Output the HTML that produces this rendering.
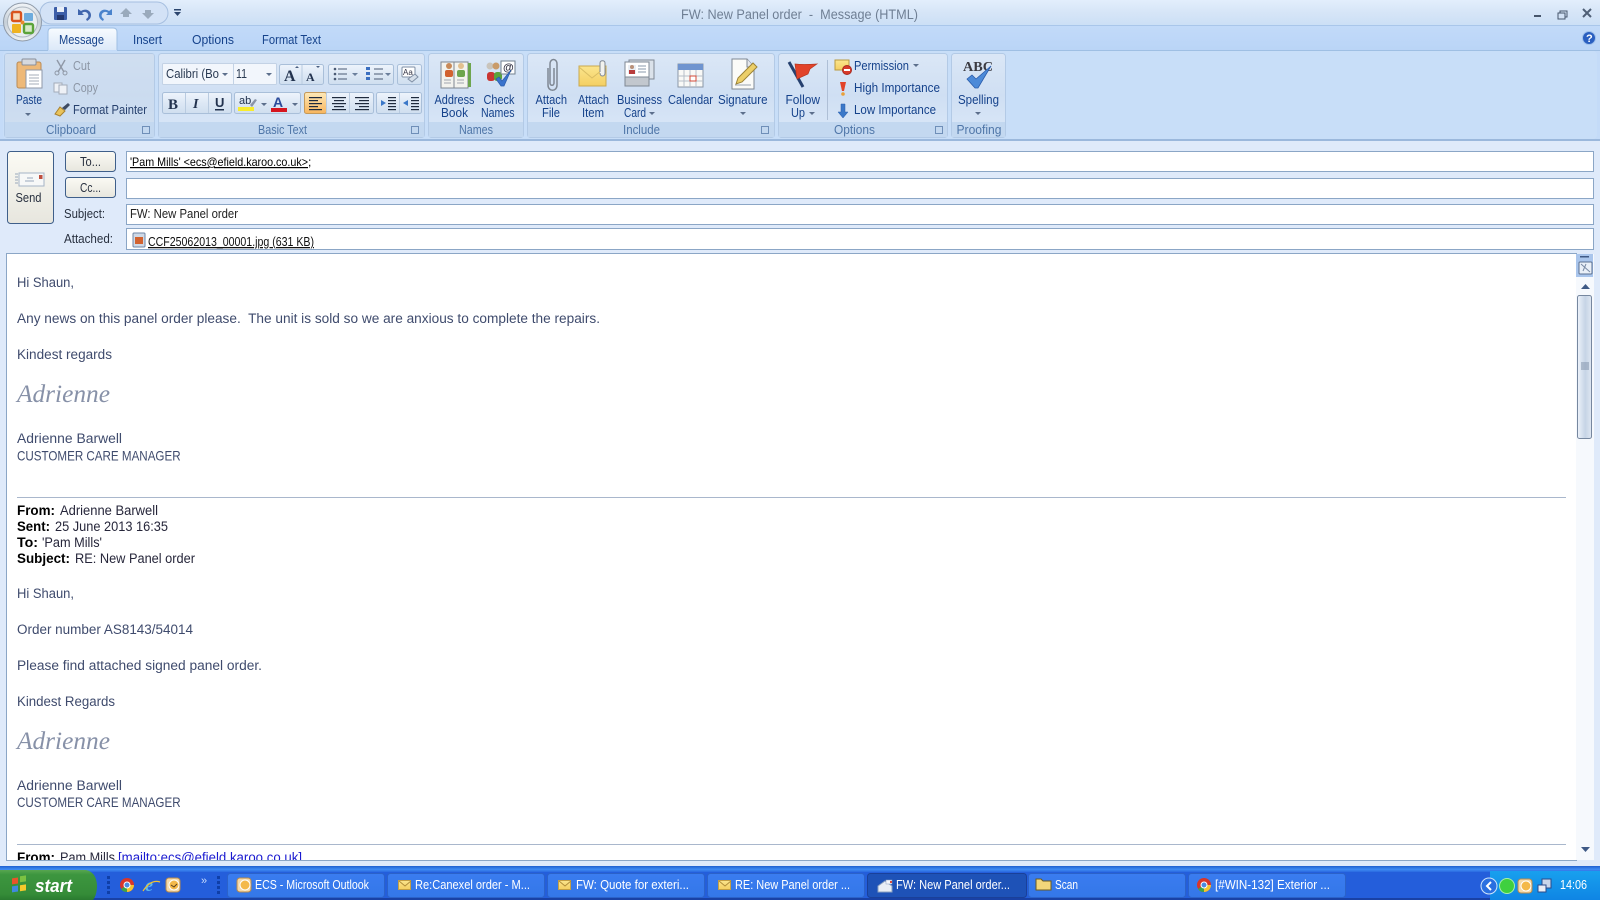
<!DOCTYPE html>
<html><head><meta charset="utf-8"><title>FW: New Panel order - Message (HTML)</title>
<style>
html,body{margin:0;padding:0;background:#dfeafa;overflow:hidden}
svg{display:block}
text{font-family:"Liberation Sans","DejaVu Sans",sans-serif;font-size:12.5px;fill:#15428b;white-space:pre}
.t{fill:#3f5a86}.l{fill:#4f76a8;font-size:12.5px}.k{fill:#222}.g{fill:#8c96a5}
.b{fill:#3f4b6d;font-size:13.5px}.bb{fill:#000;font-size:13.5px;font-weight:bold}.bk{fill:#26263a;font-size:13.5px}
.w{fill:#fff;font-size:12.5px}
.s{font-family:"Liberation Serif",serif;font-style:italic;font-size:25px;fill:#8791a8;font-weight:normal}
</style></head><body>
<svg width="1600" height="900" viewBox="0 0 1600 900" xmlns="http://www.w3.org/2000/svg">
<defs>
<linearGradient id="tb" x1="0" y1="0" x2="0" y2="1"><stop offset="0" stop-color="#e3eefc"/><stop offset=".5" stop-color="#d6e5f7"/><stop offset="1" stop-color="#cbdff6"/></linearGradient>
<linearGradient id="rb" x1="0" y1="0" x2="0" y2="1"><stop offset="0" stop-color="#c2daf9"/><stop offset="1" stop-color="#b9d4f6"/></linearGradient>
<linearGradient id="gp" x1="0" y1="0" x2="0" y2="1"><stop offset="0" stop-color="#dbe7f6"/><stop offset=".5" stop-color="#cfdff3"/><stop offset="1" stop-color="#dbe8f8"/></linearGradient>
<linearGradient id="tab" x1="0" y1="0" x2="0" y2="1"><stop offset="0" stop-color="#f7fbff"/><stop offset="1" stop-color="#dbe8f8"/></linearGradient>
<linearGradient id="btn" x1="0" y1="0" x2="0" y2="1"><stop offset="0" stop-color="#eef4fc"/><stop offset=".5" stop-color="#dde8f5"/><stop offset="1" stop-color="#cfdeef"/></linearGradient>
<linearGradient id="org" x1="0" y1="0" x2="0" y2="1"><stop offset="0" stop-color="#fde9b8"/><stop offset="1" stop-color="#f8b55e"/></linearGradient>
<linearGradient id="fb" x1="0" y1="0" x2="0" y2="1"><stop offset="0" stop-color="#fbfaf4"/><stop offset="1" stop-color="#e7e6de"/></linearGradient>
<linearGradient id="st" x1="0" y1="0" x2="0" y2="1"><stop offset="0" stop-color="#58a650"/><stop offset=".15" stop-color="#3d963f"/><stop offset=".8" stop-color="#358c38"/><stop offset="1" stop-color="#2a7a30"/></linearGradient>
<linearGradient id="tk" x1="0" y1="0" x2="0" y2="1"><stop offset="0" stop-color="#1e5fd0"/><stop offset=".1" stop-color="#3f8cf3"/><stop offset=".2" stop-color="#245edb"/><stop offset=".9" stop-color="#2663e0"/><stop offset="1" stop-color="#1941a5"/></linearGradient>
<linearGradient id="tbn" x1="0" y1="0" x2="0" y2="1"><stop offset="0" stop-color="#3a7cf0"/><stop offset="1" stop-color="#3477e8"/></linearGradient>
<linearGradient id="try" x1="0" y1="0" x2="0" y2="1"><stop offset="0" stop-color="#18a0ee"/><stop offset="1" stop-color="#0f85e4"/></linearGradient>
<linearGradient id="sil" x1="0" y1="0" x2="0" y2="1"><stop offset="0" stop-color="#f2f5f8"/><stop offset=".5" stop-color="#c6cfd8"/><stop offset="1" stop-color="#edf1f4"/></linearGradient>
<linearGradient id="th" x1="0" y1="0" x2="1" y2="0"><stop offset="0" stop-color="#eef3fa"/><stop offset=".55" stop-color="#c6d4e6"/><stop offset="1" stop-color="#dfe7f2"/></linearGradient>
<linearGradient id="env" x1="0" y1="0" x2="0" y2="1"><stop offset="0" stop-color="#fbe58d"/><stop offset="1" stop-color="#f4cf62"/></linearGradient>
<clipPath id="bc"><rect x="8" y="255" width="1568" height="605"/></clipPath>
</defs>

<rect width="1600" height="900" fill="#dfeafa"/>
<!-- title bar -->
<rect width="1600" height="26" fill="url(#tb)"/>
<rect y="25" width="1600" height="1" fill="#a9c6ea"/>
<rect y="26" width="1600" height="26" fill="url(#rb)"/>
<rect x="40" y="2" width="128" height="22" rx="11" fill="#d3e2f6" stroke="#a6bfe0"/>
<!-- office button -->
<circle cx="22.5" cy="22" r="19" fill="url(#sil)" stroke="#8f9aa8"/>
<circle cx="22.5" cy="22" r="15" fill="#e9edf0" stroke="#aeb7c0"/>
<rect x="12" y="12" width="9" height="9" rx="1.5" fill="#f6dcc0" stroke="#d9531d" stroke-width="2.4"/>
<rect x="24" y="13" width="9" height="8" rx="1" fill="#4f9bd8" opacity=".8"/>
<rect x="12" y="24" width="9" height="9" rx="1" fill="#efb320"/>
<rect x="24" y="24" width="9" height="9" rx="1.5" fill="#d8eac8" stroke="#5ba33a" stroke-width="2.4"/>
<circle cx="22.5" cy="22.5" r="2" fill="#e98a2e"/>
<!-- QAT -->
<rect x="54" y="7" width="13" height="13" rx="1" fill="#3c5ea8"/><rect x="57" y="7" width="7" height="5" fill="#e9eff8"/><rect x="57" y="15" width="7" height="5" fill="#23386f"/>
<path d="M78 9v6h6l-2-2c2-2 5-1 6 1 1 2 0 4-2 5l1 2c4-2 5-6 3-9-2-3-6-3-9-1z" fill="#4066ad"/>
<path d="M112 9v6h-6l2-2c-2-2-5-1-6 1-1 2 0 4 2 5l-1 2c-4-2-5-6-3-9 2-3 6-3 9-1z" fill="#4a83cc"/>
<path d="M126 8l6 6h-3v3h-6v-3h-3z" fill="#9aaabc"/>
<path d="M148 19l6-6h-3v-3h-6v3h-3z" fill="#9aaabc"/>
<rect x="174" y="9" width="7" height="1.5" fill="#2b456e"/><path d="M174 12h7l-3.500 4z" fill="#2b456e"/>
<text x="681" y="19" style="font-size:13.5px;fill:#6f7f94" textLength="237" lengthAdjust="spacingAndGlyphs">FW: New Panel order  -  Message (HTML)</text>
<!-- window buttons -->
<rect x="1534" y="15" width="7" height="2" fill="#46556b"/>
<rect x="1560" y="11" width="7" height="6" fill="none" stroke="#46556b"/><rect x="1558" y="13" width="7" height="6" fill="#d3e2f5" stroke="#46556b"/>
<path d="M1583 9l8 8M1591 9l-8 8" stroke="#4f5f76" stroke-width="2"/>
<circle cx="1589" cy="38" r="6.5" fill="#2a5fc0" stroke="#9fc0ea"/><text x="1586" y="42" style="font-size:11px;font-weight:bold;fill:#fff">?</text>

<!-- tabs -->
<path d="M48 51V32q0-4 4-4h61q4 0 4 4v19z" fill="url(#tab)" stroke="#9fbfe3"/>
<text x="59" y="44" textLength="45" lengthAdjust="spacingAndGlyphs">Message</text>
<text x="133" y="44" textLength="29" lengthAdjust="spacingAndGlyphs">Insert</text>
<text x="192" y="44" textLength="42" lengthAdjust="spacingAndGlyphs">Options</text>
<text x="262" y="44" textLength="59" lengthAdjust="spacingAndGlyphs">Format Text</text>

<!-- ribbon -->
<rect y="50" width="1600" height="89" fill="#c4dbf8"/>
<rect y="50" x="0" width="48" height="1" fill="#9fbfe3"/><rect y="50" x="117" width="1483" height="1" fill="#9fbfe3"/>
<rect y="139" width="1600" height="2" fill="#9bb8dc"/>
<rect x="3" y="51" width="1594" height="88" fill="#c8def8" rx="4"/>
<!-- groups -->
<g stroke="#b3cae6" fill="url(#gp)">
<rect x="4.500" y="53.500" width="150" height="84" rx="3"/>
<rect x="158.500" y="53.500" width="266" height="84" rx="3"/>
<rect x="428.500" y="53.500" width="95" height="84" rx="3"/>
<rect x="527.500" y="53.500" width="247" height="84" rx="3"/>
<rect x="778.500" y="53.500" width="169" height="84" rx="3"/>
<rect x="951.500" y="53.500" width="54" height="84" rx="3"/>
</g>
<g fill="#c3d8f0">
<rect x="5" y="122" width="149" height="15"/><rect x="159" y="122" width="265" height="15"/><rect x="429" y="122" width="94" height="15"/><rect x="528" y="122" width="246" height="15"/><rect x="779" y="122" width="168" height="15"/><rect x="952" y="122" width="53" height="15"/>
</g>
<rect x="5" y="54" width="149" height="68" fill="#c8d9ec" opacity=".6"/>
<g>
<text class="l" x="46" y="134" textLength="50" lengthAdjust="spacingAndGlyphs">Clipboard</text>
<text class="l" x="258" y="134" textLength="49" lengthAdjust="spacingAndGlyphs">Basic Text</text>
<text class="l" x="459" y="134" textLength="34" lengthAdjust="spacingAndGlyphs">Names</text>
<text class="l" x="623" y="134" textLength="37" lengthAdjust="spacingAndGlyphs">Include</text>
<text class="l" x="834" y="134" textLength="41" lengthAdjust="spacingAndGlyphs">Options</text>
<text class="l" x="956.500" y="134" textLength="45" lengthAdjust="spacingAndGlyphs">Proofing</text>
</g>
<!-- launchers -->
<g fill="none" stroke="#6f8fb8"><rect x="142.500" y="126.500" width="7" height="7"/><rect x="411.500" y="126.500" width="7" height="7"/><rect x="761.500" y="126.500" width="7" height="7"/><rect x="935.500" y="126.500" width="7" height="7"/></g>

<!-- clipboard -->
<rect x="17" y="62" width="24" height="26" rx="2" fill="#eeb978" stroke="#b98a55"/>
<rect x="22" y="59" width="14" height="6" rx="1" fill="#d6d9de" stroke="#8a8f99"/>
<path d="M26 70h16v18H26z" fill="#fff" stroke="#8f98a8"/><path d="M29 75h10M29 78h10M29 81h10M29 84h10" stroke="#a5adba"/>
<text x="16" y="104" textLength="26" lengthAdjust="spacingAndGlyphs">Paste</text>
<path d="M25 113h6l-3 3z" fill="#5c6f8c"/>
<path d="M57 60l4 7 4-7M61 67l-3 5M61 67l3 5" fill="none" stroke="#8f98a6" stroke-width="1.400"/><circle cx="57" cy="73" r="2" fill="none" stroke="#8f98a6"/><circle cx="65" cy="73" r="2" fill="none" stroke="#8f98a6"/>
<text class="g" x="73" y="70" textLength="17" lengthAdjust="spacingAndGlyphs">Cut</text>
<rect x="54" y="83" width="8" height="9" fill="#eef1f6" stroke="#a3acb9"/><rect x="59" y="85" width="8" height="9" fill="#eef1f6" stroke="#a3acb9"/>
<text class="g" x="73" y="92" textLength="25" lengthAdjust="spacingAndGlyphs">Copy</text>
<path d="M55 114l5-7 5 4-5 5z" fill="#e9c35c" stroke="#a9812e"/><path d="M62 108l6-5 2 2-5 5z" fill="#3d4a62"/>
<text class="t" x="73" y="114" textLength="74" lengthAdjust="spacingAndGlyphs" style="fill:#27416e">Format Painter</text>

<!-- font row -->
<rect x="162.500" y="63.500" width="114" height="21" rx="1" fill="#f2f6fc" stroke="#c3d2e5"/><path d="M233.500 64v20" stroke="#c3d2e5"/>
<text class="k" x="166" y="78" textLength="53" lengthAdjust="spacingAndGlyphs" style="fill:#2a3a52">Calibri (Bo</text>
<text class="k" x="236" y="78" textLength="11" lengthAdjust="spacingAndGlyphs" style="fill:#2a3a52">11</text>
<path d="M222 73h6l-3 3zM266 73h6l-3 3z" fill="#5c6f8c"/>
<g fill="url(#btn)" stroke="#a9bfd9">
<rect x="279.500" y="64.500" width="44" height="20" rx="2"/>
<rect x="328.500" y="64.500" width="65" height="20" rx="2"/>
<rect x="397.500" y="64.500" width="24" height="20" rx="2"/>
<rect x="162.500" y="92.500" width="69" height="21" rx="2"/>
<rect x="234.500" y="92.500" width="66" height="21" rx="2"/>
<rect x="304.500" y="92.500" width="69" height="21" rx="2"/>
<rect x="376.500" y="92.500" width="45" height="21" rx="2"/>
</g>
<rect x="304.500" y="92.500" width="22" height="21" rx="2" fill="url(#org)" stroke="#c59a5a"/>
<path d="M302 65v19M185.500 93v20M208.500 93v20M326.500 93v20M349.500 93v20M399.500 93v20" stroke="#b9cbe0"/>
<text x="284" y="81" style="font-family:'Liberation Serif',serif;font-weight:bold;font-size:16px;fill:#22324e">A</text>
<text x="306" y="81" style="font-family:'Liberation Serif',serif;font-weight:bold;font-size:12px;fill:#22324e">A</text>
<path d="M295 68l2-2 2 2zM316 66l2 2 2-2z" fill="#4a5f80"/>
<g fill="#4a5a74"><circle cx="335" cy="69" r="1.300"/><circle cx="335" cy="74" r="1.300"/><circle cx="335" cy="79" r="1.300"/><rect x="338" y="68.500" width="9" height="1"/><rect x="338" y="73.500" width="9" height="1"/><rect x="338" y="78.500" width="9" height="1"/>
<rect x="374" y="68.500" width="9" height="1"/><rect x="374" y="73.500" width="9" height="1"/><rect x="374" y="78.500" width="9" height="1"/>
<path d="M352 73h6l-3 3zM385 73h6l-3 3z" fill="#6b7f9c"/></g>
<g fill="#3b6fc0"><rect x="366" y="67" width="4" height="3"/><rect x="366" y="72" width="4" height="3"/><rect x="366" y="77" width="4" height="3"/></g>
<rect x="402" y="67" width="13" height="10" rx="1" fill="#fff" stroke="#7f8fa5"/><text x="403" y="75" style="font-size:8px;fill:#334">Aa</text>
<path d="M408 79l7-5 3 3-6 5z" fill="#d5dee9" stroke="#7f8fa5"/>
<text x="168" y="109" style="font-family:'Liberation Serif',serif;font-weight:bold;font-size:15px;fill:#22324e">B</text>
<text x="193" y="108" style="font-family:'Liberation Serif',serif;font-style:italic;font-weight:bold;font-size:14px;fill:#22324e">I</text>
<text x="215" y="107" style="font-family:'Liberation Sans',sans-serif;font-weight:bold;font-size:13px;fill:#22324e">U</text><rect x="215" y="109" width="9" height="1.500" fill="#22324e"/>
<text x="239" y="104" style="font-size:11px;fill:#22324e">ab</text><path d="M250 105l5-6 2 1-5 7z" fill="#8a94a8"/>
<rect x="238" y="107" width="16" height="4" fill="#f8ec2d"/>
<path d="M261 103h6l-3 3zM292 103h6l-3 3z" fill="#5c6f8c"/>
<text x="273" y="107" style="font-weight:bold;font-size:14px;fill:#2a4a9a">A</text>
<rect x="271" y="108" width="16" height="4" fill="#d6151f"/>
<g fill="#1e2a3d">
<rect x="309" y="97" width="13" height="1.200"/><rect x="309" y="100" width="9" height="1.200"/><rect x="309" y="103" width="13" height="1.200"/><rect x="309" y="106" width="9" height="1.200"/><rect x="309" y="109" width="13" height="1.200"/>
<rect x="332" y="97" width="14" height="1.200"/><rect x="334" y="100" width="10" height="1.200"/><rect x="332" y="103" width="14" height="1.200"/><rect x="334" y="106" width="10" height="1.200"/><rect x="332" y="109" width="14" height="1.200"/>
<rect x="355" y="97" width="14" height="1.200"/><rect x="359" y="100" width="10" height="1.200"/><rect x="355" y="103" width="14" height="1.200"/><rect x="359" y="106" width="10" height="1.200"/><rect x="355" y="109" width="14" height="1.200"/>
<rect x="388" y="97" width="8" height="1.200"/><rect x="388" y="100" width="8" height="1.200"/><rect x="388" y="103" width="8" height="1.200"/><rect x="388" y="106" width="8" height="1.200"/><rect x="388" y="109" width="8" height="1.200"/>
<rect x="411" y="97" width="8" height="1.200"/><rect x="411" y="100" width="8" height="1.200"/><rect x="411" y="103" width="8" height="1.200"/><rect x="411" y="106" width="8" height="1.200"/><rect x="411" y="109" width="8" height="1.200"/>
</g>
<path d="M386 103l-5-3v6zM403 103l5-3v6z" fill="#3b78c8"/>

<!-- Names icons -->
<path d="M441 62h13v26h-13zM454 62h14v26h-14z" fill="#f3f3ee" stroke="#7f8791"/>
<rect x="468" y="63" width="3" height="24" fill="#6ea54e"/>
<circle cx="449" cy="66" r="3" fill="#c98a58"/><rect x="445" y="70" width="8" height="7" rx="2" fill="#d2622f"/>
<circle cx="461" cy="66" r="3" fill="#e2c08e"/><rect x="457" y="70" width="8" height="7" rx="2" fill="#6ea54e"/>
<path d="M444 80h7M444 83h7M457 80h7M457 83h7" stroke="#a0a6ae"/>
<circle cx="490" cy="66" r="3.500" fill="#c9c4bc"/><circle cx="496" cy="66" r="3.500" fill="#c99b6a"/>
<rect x="487" y="72" width="8" height="9" rx="3" fill="#c93532"/><rect x="494" y="72" width="8" height="9" rx="3" fill="#5aa33c"/>
<rect x="501" y="61" width="14" height="13" fill="#fff" stroke="#72808f"/><text x="503" y="71" style="font-size:11px;font-weight:bold;fill:#334">@</text>
<path d="M496 79l3-2 3 4 9-11-7 16h-3z" fill="#3a73cc" stroke="#2a5cab" stroke-width=".7"/>
<text x="434.500" y="104" textLength="40" lengthAdjust="spacingAndGlyphs">Address</text>
<text x="441" y="117" textLength="27" lengthAdjust="spacingAndGlyphs">Book</text>
<text x="483.500" y="104" textLength="31" lengthAdjust="spacingAndGlyphs">Check</text>
<text x="481" y="117" textLength="33.500" lengthAdjust="spacingAndGlyphs">Names</text>

<!-- Include icons -->
<path d="M548 68v17c0 7 9 7 9 0V64c0-6-7-6-7 0v19c0 3 4 3 4 0V68" fill="none" stroke="#7f8894" stroke-width="1.500"/>
<rect x="579" y="66" width="27" height="20" fill="url(#env)" stroke="#c9a94f"/><path d="M579 67l13 11 14-11" fill="none" stroke="#d9bd63"/>
<path d="M600 72V63c0-3 5-3 5 0v10c0 4-5 4-5 0" fill="#f2f2ee" stroke="#7f8894"/>
<rect x="629" y="60" width="25" height="19" fill="#dbe2ea" stroke="#7f8894"/><rect x="625" y="62" width="24" height="19" fill="#fff" stroke="#7f8894"/>
<rect x="628" y="65" width="8" height="9" fill="#e9eef4"/><circle cx="632" cy="67" r="2" fill="#b99078"/><rect x="629" y="70" width="6" height="4" fill="#b83c3c"/>
<path d="M638 66h8M638 69h8M638 72h8" stroke="#8a98ab"/><rect x="625" y="77" width="24" height="9" fill="#c2c7ce" stroke="#7f8894"/>
<rect x="678" y="64" width="25" height="23" fill="#f9f9f7" stroke="#8a96a6"/><rect x="678" y="64" width="25" height="6" fill="#6f94cf"/>
<path d="M684 70v17M690 70v17M696 70v17M678 76h25M678 81h25" stroke="#b6bec9"/><rect x="690" y="76" width="6" height="5" fill="#fff" stroke="#d24a3a"/>
<path d="M732 59h15l7 8v22h-22z" fill="#fbfbf8" stroke="#7f8894"/><path d="M747 59v8h7" fill="#e6e8ec" stroke="#7f8894"/>
<path d="M736 84l2-6 15-15 4 4-15 15z" fill="#eccf68" stroke="#9c8335"/><path d="M735 85h16" stroke="#9aa3af"/>
<text x="535.500" y="104" textLength="31.500" lengthAdjust="spacingAndGlyphs">Attach</text>
<text x="542" y="117" textLength="18" lengthAdjust="spacingAndGlyphs">File</text>
<text x="578" y="104" textLength="31" lengthAdjust="spacingAndGlyphs">Attach</text>
<text x="582" y="117" textLength="22" lengthAdjust="spacingAndGlyphs">Item</text>
<text x="617" y="104" textLength="45" lengthAdjust="spacingAndGlyphs">Business</text>
<text x="624" y="117" textLength="22" lengthAdjust="spacingAndGlyphs">Card</text><path d="M649 112h6l-3 3z" fill="#5c6f8c"/>
<text x="668" y="104" textLength="45" lengthAdjust="spacingAndGlyphs">Calendar</text>
<text x="718" y="104" textLength="49.500" lengthAdjust="spacingAndGlyphs">Signature</text><path d="M740 112h6l-3 3z" fill="#5c6f8c"/>

<!-- Options -->
<path d="M789 62l14 25" stroke="#26406f" stroke-width="3"/><path d="M795 64q8 1 22 0l-7 5-2 5-11 5z" fill="#e2432a" stroke="#b83620" stroke-width=".7"/>
<text x="785.500" y="104" textLength="34.500" lengthAdjust="spacingAndGlyphs">Follow</text>
<text x="791" y="117" textLength="14" lengthAdjust="spacingAndGlyphs">Up</text><path d="M809 112h6l-3 3z" fill="#5c6f8c"/>
<path d="M827.500 60v60" stroke="#aebfd6"/>
<rect x="835" y="60" width="14" height="10" fill="url(#env)" stroke="#b99a40"/><circle cx="847" cy="70" r="4.500" fill="#d83a2a" stroke="#a82a20"/><rect x="844" y="69" width="6" height="2" fill="#fff"/>
<text x="854" y="70" textLength="55" lengthAdjust="spacingAndGlyphs">Permission</text><path d="M913 64h6l-3 3z" fill="#5c6f8c"/>
<path d="M840 82h6l-2 9h-2z" fill="#e2432a"/><circle cx="843" cy="94" r="1.800" fill="#e8a03a"/>
<text x="854" y="92" textLength="86" lengthAdjust="spacingAndGlyphs">High Importance</text>
<path d="M841 104h4v8h3l-5 6-5-6h3z" fill="#3b78c8" stroke="#2a5cab" stroke-width=".5"/>
<text x="854" y="114" textLength="82" lengthAdjust="spacingAndGlyphs">Low Importance</text>

<!-- Proofing -->
<text x="963" y="71" textLength="30" lengthAdjust="spacingAndGlyphs" style="font-family:'Liberation Serif',serif;font-weight:bold;font-size:14px;fill:#3b3b42">ABC</text>
<path d="M967 79l5-4 4 4 15-13-13 22h-3z" fill="#4c8ad8" stroke="#2a5cab" stroke-width=".8"/>
<text x="958" y="104" textLength="41" lengthAdjust="spacingAndGlyphs">Spelling</text><path d="M975 112h6l-3 3z" fill="#5c6f8c"/>

<!-- form -->
<rect y="141" width="1600" height="113" fill="#dfeafa"/>
<rect x="7.500" y="151.500" width="46" height="72" rx="3" fill="url(#fb)" stroke="#3f5f8a"/>
<rect x="19" y="173" width="25" height="13" fill="#f7f8f8" stroke="#a5b4c6"/><path d="M15 174h3M15 177h3M15 180h3M15 183h3M25 181h9M27 178h6" stroke="#9aa8bb"/><rect x="39" y="175" width="3.500" height="4" fill="#bf4f3f"/>
<text class="k" x="15.500" y="202" textLength="26" lengthAdjust="spacingAndGlyphs" style="fill:#28303f">Send</text>
<rect x="65.500" y="151.500" width="50" height="20" rx="3" fill="url(#fb)" stroke="#3f5f8a"/>
<rect x="65.500" y="177.500" width="50" height="20" rx="3" fill="url(#fb)" stroke="#3f5f8a"/>
<text x="80" y="166" textLength="21" lengthAdjust="spacingAndGlyphs" style="fill:#28303f">To...</text>
<text x="80" y="192" textLength="21" lengthAdjust="spacingAndGlyphs" style="fill:#28303f">Cc...</text>
<text x="64" y="218" textLength="41" lengthAdjust="spacingAndGlyphs" style="fill:#28303f">Subject:</text>
<text x="64" y="243" textLength="49" lengthAdjust="spacingAndGlyphs" style="fill:#28303f">Attached:</text>
<g fill="#fff" stroke="#8ba6c6"><rect x="126.500" y="151.500" width="1467" height="20"/><rect x="126.500" y="178.500" width="1467" height="20"/><rect x="126.500" y="204.500" width="1467" height="20"/><rect x="126.500" y="228.500" width="1467" height="21"/></g>
<text x="130" y="166" textLength="178" lengthAdjust="spacingAndGlyphs" style="fill:#000;text-decoration:underline;font-size:12px">'Pam Mills' &lt;ecs@efield.karoo.co.uk&gt;</text><text x="308" y="166" style="fill:#000;font-size:12px">;</text>
<text x="130" y="218" textLength="108" lengthAdjust="spacingAndGlyphs" style="fill:#222">FW: New Panel order</text>
<rect x="133" y="233" width="12" height="14" rx="1" fill="#cfd9e6" stroke="#6f86a5"/><rect x="135" y="237" width="8" height="7" fill="#d2622f"/>
<text x="148" y="246" textLength="166" lengthAdjust="spacingAndGlyphs" style="fill:#111;text-decoration:underline">CCF25062013_00001.jpg (631 KB)</text>

<!-- body -->
<rect x="6.500" y="253.500" width="1570" height="607" fill="#fff" stroke="#8ba6c6"/>
<g clip-path="url(#bc)">
<text class="b" x="17" y="287" textLength="57" lengthAdjust="spacingAndGlyphs">Hi Shaun,</text>
<text class="b" x="17" y="323" textLength="583" lengthAdjust="spacingAndGlyphs">Any news on this panel order please.  The unit is sold so we are anxious to complete the repairs.</text>
<text class="b" x="17" y="359" textLength="95" lengthAdjust="spacingAndGlyphs">Kindest regards</text>
<text class="s" x="17" y="402" textLength="93" lengthAdjust="spacingAndGlyphs">Adrienne</text>
<text class="b" x="17" y="443" textLength="105" lengthAdjust="spacingAndGlyphs">Adrienne Barwell</text>
<text class="b" transform="translate(17 460.500) scale(.861 1)">CUSTOMER CARE MANAGER</text>
<rect x="17" y="497" width="1549" height="1" fill="#a9b7cc"/>
<text class="bb" x="17" y="515" textLength="38" lengthAdjust="spacingAndGlyphs">From:</text><text class="bk" x="60" y="515" textLength="98" lengthAdjust="spacingAndGlyphs">Adrienne Barwell</text>
<text class="bb" x="17" y="531" textLength="33" lengthAdjust="spacingAndGlyphs">Sent:</text><text class="bk" x="55" y="531" textLength="113" lengthAdjust="spacingAndGlyphs">25 June 2013 16:35</text>
<text class="bb" x="17" y="547" textLength="21" lengthAdjust="spacingAndGlyphs">To:</text><text class="bk" x="42" y="547" textLength="60" lengthAdjust="spacingAndGlyphs">'Pam Mills'</text>
<text class="bb" x="17" y="563" textLength="53" lengthAdjust="spacingAndGlyphs">Subject:</text><text class="bk" x="75" y="563" textLength="120" lengthAdjust="spacingAndGlyphs">RE: New Panel order</text>
<text class="b" x="17" y="598" textLength="57" lengthAdjust="spacingAndGlyphs">Hi Shaun,</text>
<text class="b" x="17" y="634" textLength="176" lengthAdjust="spacingAndGlyphs">Order number AS8143/54014</text>
<text class="b" x="17" y="670" textLength="245" lengthAdjust="spacingAndGlyphs">Please find attached signed panel order.</text>
<text class="b" x="17" y="706" textLength="98" lengthAdjust="spacingAndGlyphs">Kindest Regards</text>
<text class="s" x="17" y="749" textLength="93" lengthAdjust="spacingAndGlyphs">Adrienne</text>
<text class="b" x="17" y="790" textLength="105" lengthAdjust="spacingAndGlyphs">Adrienne Barwell</text>
<text class="b" transform="translate(17 807) scale(.861 1)">CUSTOMER CARE MANAGER</text>
<rect x="17" y="844" width="1549" height="1" fill="#a9b7cc"/>
<text class="bb" x="17" y="862" textLength="38" lengthAdjust="spacingAndGlyphs">From:</text><text class="bk" x="60" y="862" textLength="55" lengthAdjust="spacingAndGlyphs">Pam Mills</text><text class="bk" x="118" y="862" textLength="184" lengthAdjust="spacingAndGlyphs" style="fill:#1a1ad0;text-decoration:underline">[mailto:ecs@efield.karoo.co.uk]</text>
</g>

<!-- scrollbar -->
<rect x="1576" y="254" width="18" height="606" fill="#f6f9fd"/>
<rect x="1576" y="254" width="17" height="23" fill="#a9c5ec"/>
<rect x="1580" y="256" width="9" height="1.500" fill="#3f5a86"/>
<rect x="1579" y="262" width="13" height="12" rx="1" fill="#eaf0f8" stroke="#5a6f8f"/><path d="M1581 264l9 8M1586 264l-3 7" stroke="#7a8ba5"/>
<path d="M1581 289h9l-4.500-5z" fill="#3f5a86"/>
<rect x="1577.500" y="295.500" width="14" height="143" rx="2" fill="url(#th)" stroke="#76879f"/>
<path d="M1581 363h8M1581 365h8M1581 367h8M1581 369h8" stroke="#7f90a8"/>
<path d="M1581 847h9l-4.500 5z" fill="#3f5a86"/>

<!-- taskbar -->
<rect y="866" width="1600" height="34" fill="url(#tk)"/>
<rect y="872" width="1600" height="27" fill="#245edb"/>
<rect y="898" width="1600" height="2" fill="#1941a5"/>
<path d="M0 870h86q10 2 11 15 0 10-4 15H0z" fill="url(#st)"/>
<rect x="12" y="878" width="6" height="6" fill="#e8542b" transform="skewY(-8) translate(0 2)"/><rect x="20" y="876" width="6" height="6" fill="#7cc242" transform="skewY(-8) translate(0 3)"/><rect x="12" y="886" width="6" height="6" fill="#3f8ae0" transform="skewY(-8) translate(0 2)"/><rect x="20" y="885" width="6" height="6" fill="#f6c92c" transform="skewY(-8) translate(0 3)"/>
<text x="35" y="892" textLength="37" lengthAdjust="spacingAndGlyphs" style="fill:#fff;font-style:italic;font-weight:bold;font-size:18px">start</text>
<g fill="#0f3fa8"><rect x="107" y="876" width="3" height="3"/><rect x="107" y="881" width="3" height="3"/><rect x="107" y="886" width="3" height="3"/><rect x="107" y="891" width="3" height="3"/><rect x="217" y="876" width="3" height="3"/><rect x="217" y="881" width="3" height="3"/><rect x="217" y="886" width="3" height="3"/><rect x="217" y="891" width="3" height="3"/></g>
<circle cx="127" cy="885" r="7" fill="#d8362a"/><path d="M127 885l-6 4a7 7 0 0 0 6 3z" fill="#3fa34a"/><path d="M127 885v7a7 7 0 0 0 7-7z" fill="#f4c430"/><circle cx="127" cy="885" r="3" fill="#4a8ae0" stroke="#fff"/>
<text x="145" y="891" style="font-family:'Liberation Serif',serif;font-style:italic;font-weight:bold;font-size:18px;fill:#59b7f0">e</text><path d="M143 891q8-12 17-9" fill="none" stroke="#f1c232" stroke-width="1.200"/>
<rect x="166" y="878" width="14" height="14" rx="3" fill="#f5d9a8" stroke="#b88a4c"/><circle cx="174" cy="885" r="5" fill="#f4b94a" stroke="#fff"/><path d="M171 885l3 2 3-3" fill="none" stroke="#5a4020"/>
<text x="201" y="884" style="fill:#c7dafb;font-size:11px">»</text>
<g fill="url(#tbn)" stroke="#2b62c9">
<rect x="227.500" y="873.500" width="157" height="24" rx="3"/>
<rect x="387.500" y="873.500" width="157" height="24" rx="3"/>
<rect x="547.500" y="873.500" width="157" height="24" rx="3"/>
<rect x="707.500" y="873.500" width="157" height="24" rx="3"/>
<rect x="1028.500" y="873.500" width="157" height="24" rx="3"/>
<rect x="1188.500" y="873.500" width="157" height="24" rx="3"/>
</g>
<rect x="867.500" y="873.500" width="159" height="24" rx="3" fill="#1e52b7" stroke="#1a4099"/>
<rect x="237" y="878" width="14" height="14" rx="3" fill="#f5d9a8" stroke="#b88a4c"/><circle cx="245" cy="885" r="5" fill="#f4b94a" stroke="#fff"/>
<text class="w" x="255" y="889" textLength="114" lengthAdjust="spacingAndGlyphs">ECS - Microsoft Outlook</text>
<g fill="url(#env)" stroke="#c39f45"><rect x="398.500" y="880.500" width="12" height="9"/><rect x="558.500" y="880.500" width="12" height="9"/><rect x="718.500" y="880.500" width="12" height="9"/></g>
<path d="M399 881l6 5 6-5M559 881l6 5 6-5M719 881l6 5 6-5" fill="none" stroke="#b18e3a"/>
<text class="w" x="415" y="889" textLength="115" lengthAdjust="spacingAndGlyphs">Re:Canexel order - M...</text>
<text class="w" x="576" y="889" textLength="113" lengthAdjust="spacingAndGlyphs">FW: Quote for exteri...</text>
<text class="w" x="735" y="889" textLength="115" lengthAdjust="spacingAndGlyphs">RE: New Panel order ...</text>
<path d="M878 886l7-5 7 5v6h-14z" fill="#e9eef5" stroke="#8aa0c0"/><rect x="886" y="880" width="6" height="4" fill="#f4f6fa" stroke="#8aa0c0" stroke-width=".5"/><rect x="890" y="881" width="2" height="2" fill="#d84a3a"/>
<text class="w" x="896" y="889" textLength="114" lengthAdjust="spacingAndGlyphs" style="font-size:12.5px">FW: New Panel order...</text>
<path d="M1036 879h5l2 2h8v9h-15z" fill="#f2d67a" stroke="#6a5a20"/>
<text class="w" x="1055" y="889" textLength="23" lengthAdjust="spacingAndGlyphs">Scan</text>
<circle cx="1204" cy="885" r="7" fill="#d8362a"/><path d="M1204 885l-6 4a7 7 0 0 0 6 3z" fill="#3fa34a"/><path d="M1204 885v7a7 7 0 0 0 7-7z" fill="#f4c430"/><circle cx="1204" cy="885" r="3" fill="#4a8ae0" stroke="#fff"/>
<text class="w" x="1215" y="889" textLength="115" lengthAdjust="spacingAndGlyphs">[#WIN-132] Exterior ...</text>
<rect x="1490" y="871" width="110" height="29" fill="url(#try)"/>
<circle cx="1489" cy="886" r="8" fill="#2a6fe0" stroke="#cfe5fb"/><path d="M1491 882l-4 4 4 4" fill="none" stroke="#fff" stroke-width="2"/>
<circle cx="1507" cy="886" r="7.500" fill="#3fd03f" stroke="#a8efa8"/>
<rect x="1518" y="879" width="14" height="14" rx="3" fill="#f5d9a8" stroke="#b88a4c"/><circle cx="1526" cy="886" r="5" fill="#f4b94a" stroke="#fff"/>
<rect x="1542" y="879" width="9" height="9" fill="#c8d6ea" stroke="#2a4a8a"/><rect x="1538" y="885" width="8" height="7" fill="#e9eef5" stroke="#2a4a8a"/>
<text class="w" x="1560" y="889" textLength="27" lengthAdjust="spacingAndGlyphs">14:06</text>
</svg>
</body></html>
